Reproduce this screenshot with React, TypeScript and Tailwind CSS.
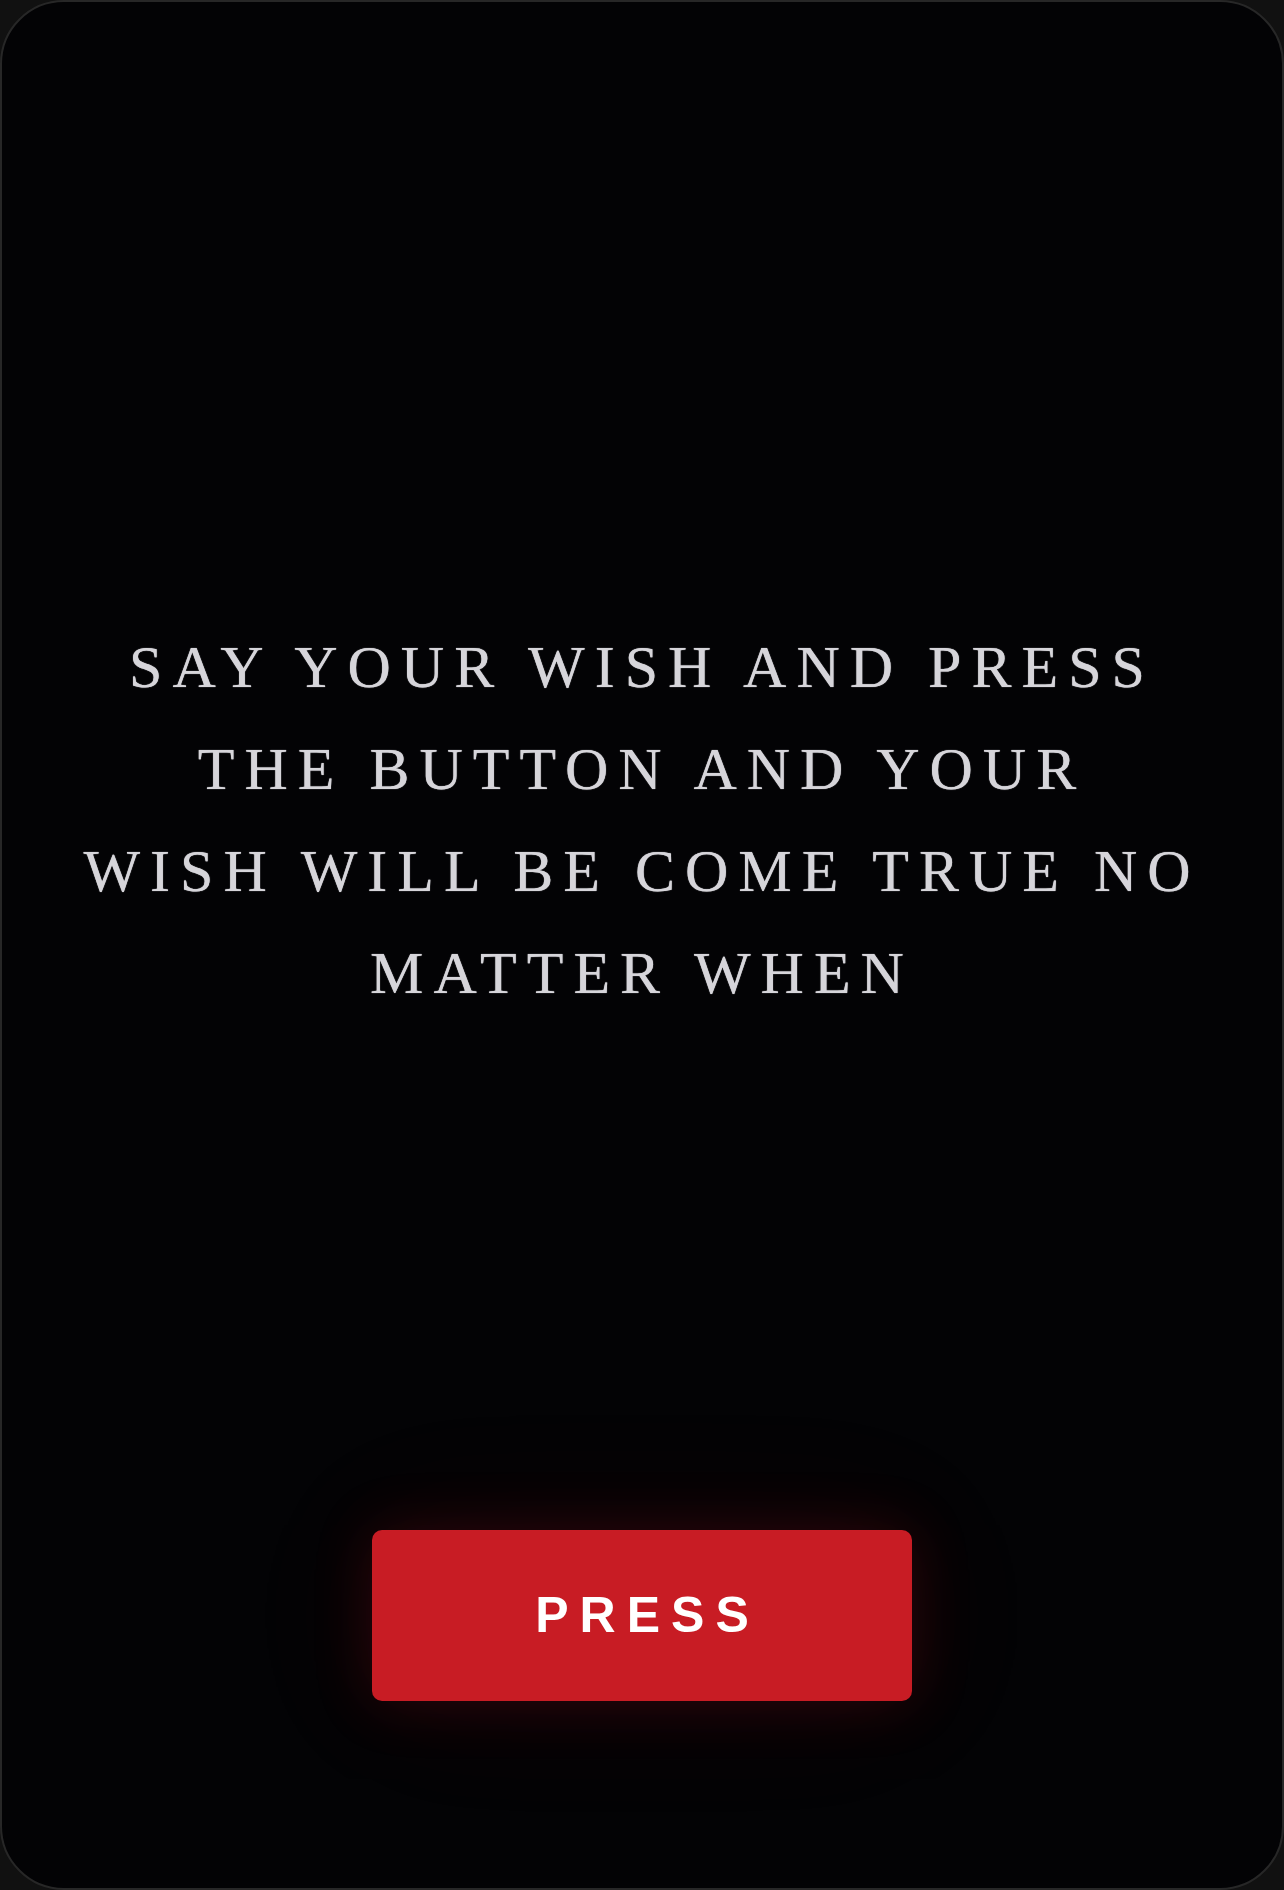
import React from 'react';

const lines = [
  'SAY YOUR WISH AND PRESS',
  'THE BUTTON AND YOUR',
  'WISH WILL BE COME TRUE NO',
  'MATTER WHEN',
];

export default function App() {
  return (
    <div className="w-[1284px] h-[1890px] bg-[#111111]">
      <div className="h-full flex flex-col items-center rounded-[64px] border-2 border-[#272727] bg-[#030305]">
        <p
          className="pt-[614px] text-center text-[60px] leading-[102px] tracking-[10px] text-[#d6d5da] [text-shadow:0_0_1px_#d6d5da]"
          style={{ fontFamily: '"Liberation Serif", "Times New Roman", serif' }}
        >
          {lines.map((line, i) => (
            <React.Fragment key={i}>
              {line}
              {i < lines.length - 1 && <br />}
            </React.Fragment>
          ))}
        </p>

        <button
          type="button"
          className="mt-[506px] w-[540px] h-[171px] rounded-[10px] bg-[#c81c24] text-white text-[50px] font-bold tracking-[11px] pl-[11px] shadow-[0_0_60px_rgba(200,28,36,0.2),0_0_150px_rgba(200,28,36,0.07)]"
          style={{ fontFamily: '"Liberation Sans", Arial, sans-serif' }}
        >
          PRESS
        </button>
      </div>
    </div>
  );
}
